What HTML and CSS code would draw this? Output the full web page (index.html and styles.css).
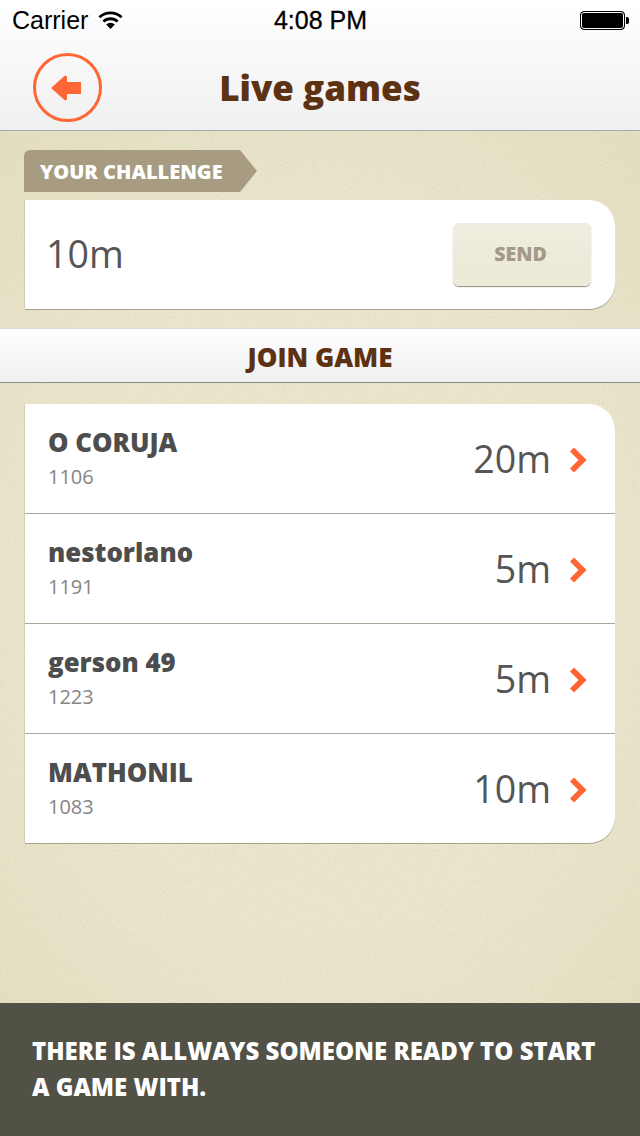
FILE: index.html
```html
<!DOCTYPE html>
<html lang="en">
<head>
<meta charset="utf-8">
<title>Live games</title>
<link rel="stylesheet" href="styles.css">
</head>
<body>
<div class="app">
  <header class="top">
    <div class="status">
      <div class="status-left">
        <span class="carrier">Carrier</span>
        <svg class="wifi" width="25" height="20" viewBox="0 0 25 20"><path d="M12.500 19 8.200 14.400a6.300 6.300 0 0 1 8.600 0Z" fill="#000"/><path d="M5.400 11.500a10.500 10.500 0 0 1 14.200 0M1.400 7.300a16.200 16.200 0 0 1 22.200 0" fill="none" stroke="#000" stroke-width="2.800"/></svg>
      </div>
      <span class="clock">4:08 PM</span>
      <div class="battery"><span class="battery-body"></span><span class="battery-tip"></span></div>
    </div>
    <nav class="nav">
      <a class="back">
        <svg width="70" height="70" viewBox="0 0 70 70"><circle cx="34.500" cy="34.500" r="33" fill="none" stroke="#ff6633" stroke-width="3"/><path d="M18 35 32 22.500 34 23.500V29H48V41H34V46.500L32 47.500Z" fill="#ff6633"/></svg>
      </a>
      <h1 class="title">Live games</h1>
    </nav>
  </header>

  <main class="content">
    <section class="challenge">
      <div class="tag">YOUR CHALLENGE</div>
      <div class="card challenge-card">
        <span class="challenge-time">10m</span>
        <button class="send">SEND</button>
      </div>
    </section>

    <h2 class="join">JOIN GAME</h2>

    <ul class="card games">
      <li class="game">
        <div class="player"><span class="name">O CORUJA</span><span class="rating">1106</span></div>
        <span class="time">20m</span>
        <svg class="chev" width="18" height="28" viewBox="0 0 18 28"><path d="M3 3.500 13.500 14 3 24.500" fill="none" stroke="#ff6633" stroke-width="5.800"/></svg>
      </li>
      <li class="game">
        <div class="player"><span class="name">nestorlano</span><span class="rating">1191</span></div>
        <span class="time">5m</span>
        <svg class="chev" width="18" height="28" viewBox="0 0 18 28"><path d="M3 3.500 13.500 14 3 24.500" fill="none" stroke="#ff6633" stroke-width="5.800"/></svg>
      </li>
      <li class="game">
        <div class="player"><span class="name">gerson 49</span><span class="rating">1223</span></div>
        <span class="time">5m</span>
        <svg class="chev" width="18" height="28" viewBox="0 0 18 28"><path d="M3 3.500 13.500 14 3 24.500" fill="none" stroke="#ff6633" stroke-width="5.800"/></svg>
      </li>
      <li class="game">
        <div class="player"><span class="name">MATHONIL</span><span class="rating">1083</span></div>
        <span class="time">10m</span>
        <svg class="chev" width="18" height="28" viewBox="0 0 18 28"><path d="M3 3.500 13.500 14 3 24.500" fill="none" stroke="#ff6633" stroke-width="5.800"/></svg>
      </li>
    </ul>
  </main>

  <footer class="tip">THERE IS ALLWAYS SOMEONE READY TO START A GAME WITH.</footer>
</div>
</body>
</html>
```

FILE: styles.css
```css
* { box-sizing: border-box; margin: 0; padding: 0; }
html, body { height: 100%; }
body { font-family: "Open Sans", sans-serif; background: #e8e3c9; overflow: hidden; }

.app {
  width: 640px;
  height: 1136px;
  display: flex;
  flex-direction: column;
  background-color: #ece8d0;
  background-image:
    url("data:image/svg+xml,%3Csvg xmlns='http://www.w3.org/2000/svg' width='320' height='320'%3E%3Cfilter id='n'%3E%3CfeTurbulence type='fractalNoise' baseFrequency='.6' numOctaves='2' stitchTiles='stitch'/%3E%3CfeColorMatrix values='0 0 0 0 .45 0 0 0 0 .42 0 0 0 0 .25 0 0 0 .3 -.09'/%3E%3C/filter%3E%3Crect width='320' height='320' filter='url(%23n)'/%3E%3C/svg%3E"),
    radial-gradient(ellipse 480px 620px at 50% 52%, rgba(227,221,190,0) 55%, rgba(224,218,184,.55) 100%);
}

.top {
  height: 131px;
  flex: none;
  background: linear-gradient(#ffffff, #f0f0f0);
  border-bottom: 1px solid #a9a9a9;
}

.status {
  height: 40px;
  padding: 0 11px 0 12px;
  display: flex;
  align-items: center;
  justify-content: space-between;
  font-family: "Liberation Sans", Arial, sans-serif;
  color: #000;
  font-size: 25px;
}
.status-left { display: flex; align-items: center; gap: 10px; width: 140px; }
.carrier { line-height: 40px; }
.wifi { display: block; }
.clock { -webkit-text-stroke: .3px #000; line-height: 40px; }
.battery { display: flex; align-items: center; width: 140px; justify-content: flex-end; }
.battery-body {
  width: 45px;
  height: 19px;
  background: #000;
  border: 1px solid #000;
  box-shadow: inset 0 0 0 1px #fff;
  border-radius: 4px;
}
.battery-tip { width: 3px; height: 7px; background: #000; border-radius: 0 2px 2px 0; margin-left: 1px; }

.nav {
  height: 90px;
  position: relative;
  display: flex;
  align-items: center;
  justify-content: center;
}
.back { position: absolute; left: 33px; top: 13px; width: 70px; height: 70px; display: block; }
.back svg { display: block; }
.title { font-size: 35px; font-weight: 800; color: #5c3213; line-height: 1; margin-top: 5px; }

.content { flex: 1; padding-top: 19px; display: flex; flex-direction: column; }

.challenge { display: flex; flex-direction: column; gap: 8px; }
.tag {
  width: 233px;
  height: 42px;
  margin-left: 24px;
  padding-left: 16px;
  background: #a79c82;
  color: #fff;
  font-size: 20px;
  font-weight: 800;
  line-height: 44px;
  clip-path: polygon(0 0, 216px 0, 100% 50%, 216px 100%, 0 100%);
  border-top-left-radius: 6px;
}

.card {
  width: 590px;
  margin-left: 25px;
  background: #fff;
  border-radius: 0 26px 26px 0;
  box-shadow: 0 1px 0 #a5a18c, -1px 0 0 rgba(165,161,140,.3);
}
.challenge-card {
  height: 109px;
  padding: 0 24px 0 21px;
  display: flex;
  align-items: center;
  justify-content: space-between;
}
.challenge-time { font-size: 37.6px; color: #555; margin-top: -2px; }
.send {
  width: 138px;
  height: 63px;
  font-family: inherit;
  font-size: 19.5px;
  font-weight: 800;
  color: #a39a87;
  background: linear-gradient(#eeeddf, #ebead7);
  border: 1px solid #f0ebe2;
  border-radius: 6px;
  box-shadow: 0 1px 1px #8f8a78;
  padding: 0 3px 2px 0;
}

.join {
  margin-top: 19px;
  height: 55px;
  background: linear-gradient(#ffffff, #f0f0f0);
  border-top: 1px solid #dcdad0;
  border-bottom: 1px solid #8f8d80;
  font-size: 26px;
  font-weight: 800;
  color: #5c3213;
  text-align: center;
  line-height: 56px;
}

.games { margin-top: 21px; list-style: none; }
.game {
  height: 110px;
  padding: 0 28px 0 23px;
  display: flex;
  align-items: center;
  border-bottom: 1px solid #a8a798;
}
.game:last-child { border-bottom: 0; height: 109px; }
.player { flex: 1; display: flex; flex-direction: column; padding-top: 2px; }
.name { font-size: 25.8px; font-weight: 800; color: #4d4d4d; line-height: 34px; }
.rating { font-size: 20px; color: #858585; line-height: 34px; margin-top: 1px; }
.time { font-size: 37.6px; color: #555; }
.chev { margin: 2px 0 0 18px; display: block; }

.tip {
  flex: none;
  height: 133px;
  padding: 30px 40px 0 32px;
  background: #525146;
  color: #fff;
  font-size: 24px;
  font-weight: 800;
  line-height: 36px;
}
```
